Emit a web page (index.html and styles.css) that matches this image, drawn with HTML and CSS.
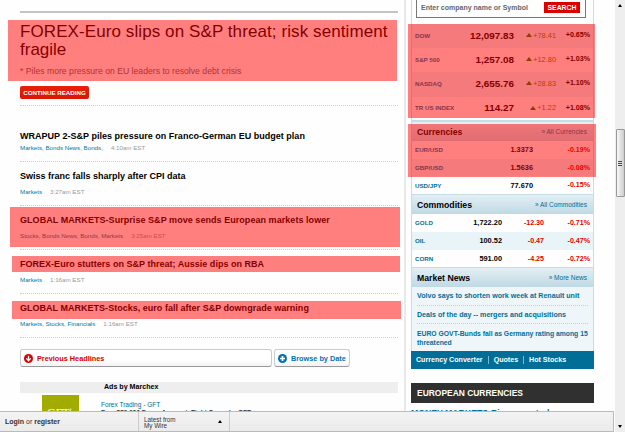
FILE: index.html
```html
<!DOCTYPE html>
<html lang="en">
<head>
<meta charset="utf-8">
<title>FOREX-Euro slips on S&amp;P threat</title>
<link rel="stylesheet" href="styles.css">
</head>
<body>
<div class="window">
  <div class="content">
  <div class="page">
    <main class="main">
      <section class="lead mark mark-lead">
        <h1><span class="l1">FOREX-Euro slips on S&amp;P threat; risk sentiment</span><br>fragile</h1>
        <p>* Piles more pressure on EU leaders to resolve debt crisis</p>
      </section>
      <div class="lead-more"><a class="continue">CONTINUE READING</a></div>
      <article class="story first">
        <h2 class="t1">WRAPUP 2-S&amp;P piles pressure on Franco-German EU budget plan</h2>
        <div class="meta"><a>Markets, Bonds News, Bonds,</a><time>4:10am EST</time></div>
      </article>
      <article class="story">
        <h2>Swiss franc falls sharply after CPI data</h2>
        <div class="meta"><a>Markets</a><time>3:27am EST</time></div>
      </article>
      <article class="story mark mark-a">
        <h2 class="t3">GLOBAL MARKETS-Surprise S&amp;P move sends European markets lower</h2>
        <div class="meta"><a>Stocks, Bonds News, Bonds, Markets</a><time>3:25am EST</time></div>
      </article>
      <article class="story mark mark-b">
        <h2 class="t1">FOREX-Euro stutters on S&amp;P threat; Aussie dips on RBA</h2>
        <div class="meta"><a>Markets</a><time>1:16am EST</time></div>
      </article>
      <article class="story mark mark-c">
        <h2 class="t1">GLOBAL MARKETS-Stocks, euro fall after S&amp;P downgrade warning</h2>
        <div class="meta"><a>Markets, Stocks, Financials</a><time>1:16am EST</time></div>
      </article>
      <nav class="pager">
        <a class="prev"><svg width="9" height="9" viewBox="0 0 9 9"><circle cx="4.5" cy="4.5" r="4.5" fill="#d90000"/><path d="M4.5 1.8v4.6M2.3 4.4l2.2 2.3 2.2-2.3" fill="none" stroke="#fff" stroke-width="1.3"/></svg><span>Previous Headlines</span></a>
        <a class="browse"><svg width="9" height="9" viewBox="0 0 9 9"><circle cx="4.5" cy="4.5" r="4.5" fill="#0072b5"/><path d="M4.5 2v5M2 4.5h5" stroke="#fff" stroke-width="1.7"/></svg><span>Browse by Date</span></a>
      </nav>
      <div class="ads-title">Ads by Marchex</div>
      <div class="ad">
        <div class="ad-logo">GFT<sup>i</sup></div>
        <div class="ad-text"><a>Forex Trading - GFT</a><p>Free $50,000 Demo Account. Tight Spreads. GFT</p></div>
      </div>
    </main>
    <aside class="side">
      <div class="box">
        <div class="search"><span>Enter company name or Symbol</span><b>SEARCH</b></div>
        <div class="mark mark-idx">
          <div class="idx odd"><a>DOW</a><b>12,097.83</b><i></i><span>+78.41</span><em>+0.65%</em></div>
          <div class="idx"><a>S&amp;P 500</a><b>1,257.08</b><i></i><span>+12.80</span><em>+1.03%</em></div>
          <div class="idx odd"><a>NASDAQ</a><b>2,655.76</b><i></i><span>+28.83</span><em>+1.10%</em></div>
          <div class="idx"><a>TR US INDEX</a><b>114.27</b><i></i><span>+1.22</span><em>+1.08%</em></div>
        </div>
        <div class="mark mark-fx">
          <div class="head"><h3>Currencies</h3><a>» All Currencies</a></div>
          <div class="fx"><a>EUR/USD</a><b>1.3373</b><em>-0.19%</em></div>
          <div class="fx odd"><a>GBP/USD</a><b>1.5636</b><em>-0.08%</em></div>
          <div class="fx"><a>USD/JPY</a><b>77.670</b><em>-0.15%</em></div>
        </div>
        <div class="head"><h3>Commodities</h3><a>» All Commodities</a></div>
        <div class="com"><a>GOLD</a><b>1,722.20</b><span>-12.30</span><em>-0.71%</em></div>
        <div class="com odd"><a>OIL</a><b>100.52</b><span>-0.47</span><em>-0.47%</em></div>
        <div class="com"><a>CORN</a><b>591.00</b><span>-4.25</span><em>-0.72%</em></div>
        <div class="head"><h3>Market News</h3><a>» More News</a></div>
        <ul class="news">
          <li>Volvo says to shorten work week at Renault unit</li>
          <li>Deals of the day -- mergers and acquisitions</li>
          <li class="n3">EURO GOVT-Bunds fall as Germany rating among 15 threatened</li>
        </ul>
      </div>
      <nav class="tools"><a>Currency Converter</a><a>Quotes</a><a>Hot Stocks</a></nav>
      <h3 class="euro">EUROPEAN CURRENCIES</h3>
      <a class="mm">MONEY MARKETS-Bigger central</a>
    </aside>
  </div>
  <footer class="bar">
    <div class="login"><b>Login</b> or <b>register</b></div>
    <div class="wire"><span>Latest from<br>My Wire</span><i class="up"></i></div>
  </footer>
  </div>
  <div class="scrollbar">
    <i class="up"></i><div class="thumb"><i></i><i></i><i></i></div><i class="down"></i>
  </div>
</div>
</body>
</html>
```
FILE: styles.css
```css
* { box-sizing: border-box; margin: 0; padding: 0; }
body { width: 625px; height: 432px; overflow: hidden; background: #fff; font-family: "Liberation Sans", Arial, sans-serif; color: #000; }
.window { width: 625px; height: 432px; display: flex; overflow: hidden; }
.content { width: 615px; height: 432px; background: #fefefe; }
.page { width: 615px; height: 411px; display: flex; overflow: hidden; }
a, h1, h2, h3, time, span, b, em { white-space: nowrap; }
i, em { font-style: normal; }
svg { flex: none; }

.mark { position: relative; }
.mark::after { content: ""; position: absolute; background: rgba(255, 0, 0, .5); }
.mark-lead::after { left: -12px; top: 7px; width: 389px; height: 61px; }
.mark-a::after { left: -10px; top: 1px; width: 390px; height: 40px; }
.mark-b::after { left: -8px; top: 6px; width: 388px; height: 16px; }
.mark-c::after { left: -8px; top: 7px; width: 389px; height: 18px; }
.mark-idx::after { left: -4px; top: 0; width: 187px; height: 94px; }
.mark-fx::after { left: -4px; top: 3px; width: 188px; height: 53px; }

.main { width: 406px; height: 411px; padding: 11px 6px 0 20px; border-right: 2px solid #e9e9e9; }
.lead { width: 378px; height: 71px; border-top: 2px solid #c4c4c4; padding-top: 10px; }
.lead h1 { font-size: 17px; line-height: 18px; font-weight: 400; }
.l1 { letter-spacing: .09px; }
.lead p { font-size: 8.67px; line-height: 10px; margin-top: 7px; color: #666; white-space: nowrap; }
.lead-more { width: 378px; height: 24px; padding-top: 4px; border-bottom: 1px dotted #ccc; }
.continue { display: block; width: 69px; height: 13px; border-radius: 2px; background: linear-gradient(#e8200a, #dc1500); color: #fff; font-weight: 700; font-size: 6.2px; line-height: 14px; text-align: center; }

.story { width: 378px; height: 44px; padding-top: 9px; border-bottom: 1px dotted #ccc; }
.story.first { height: 56px; padding-top: 25px; }
.story h2 { font-size: 9px; line-height: 11px; height: 11px; }
.story .t1 { letter-spacing: .02px; }
.story .t3 { letter-spacing: .05px; }
.meta { display: flex; gap: 8px; margin-top: 6px; font-size: 6.2px; line-height: 8px; color: #999; }
.first .meta { margin-top: 2px; }
.meta a { color: #0079a3; }

.pager { display: flex; gap: 2px; margin-top: 11px; }
.pager a { display: flex; align-items: center; height: 18px; padding: 0 3px; gap: 4px; border: 1px solid #ccc; border-bottom-color: #999; border-radius: 3px; background: linear-gradient(#fff 60%, #f3f3f3); font-weight: 700; font-size: 7.3px; }
.pager .prev { width: 252px; color: #d90000; }
.pager .browse { width: 76px; color: #0072b5; }
.ads-title { width: 378px; height: 11px; margin-top: 15px; padding-left: 84px; background: #eee; font-size: 7.1px; line-height: 11px; font-weight: 700; }
.ad { display: flex; padding: 2px 0 0 22px; gap: 22px; }
.ad-logo { width: 37px; height: 16px; overflow: hidden; padding: 11px 0 0 5px; background: #a1ab00; color: #fff; font: 12px/14px "Liberation Serif", serif; }
.ad-logo sup { font-size: 7px; line-height: 1px; }
.ad-text { padding-top: 5px; font-size: 6.55px; line-height: 9px; white-space: nowrap; }
.ad-text a { display: block; color: #006e97; }
.ad-text p { font-weight: 700; font-size: 6.5px; line-height: 8px; color: #333; }

.side { width: 183px; margin-left: 5px; }
.box { border: 1px solid #c5dde6; border-width: 0 1px; }
.search { display: flex; justify-content: space-between; align-items: flex-start; width: 170px; height: 18px; margin: 0 0 6px 4px; padding: 2px 5px 0 4px; border: 1px solid #777; border-top: 0; font-size: 7px; line-height: 11px; font-weight: 700; color: #666; }
.search b { width: 36px; height: 11px; background: #d90000; color: #fff; text-align: center; font-size: 6.9px; line-height: 11px; }
.idx, .fx, .com { display: grid; align-items: center; padding: 0 3px; font-size: 7.1px; font-weight: 700; text-align: right; }
.idx a, .fx a, .com a { text-align: left; color: #006e97; font-size: 6.2px; }
.idx { height: 24.2px; grid-template-columns: 46px 53px 1fr auto 34px; padding-bottom: 2px; }
.idx b { font-size: 9.9px; }
.idx i { justify-self: end; margin-right: 1px; border: 3.5px solid transparent; border-top: 0; border-bottom: 4px solid #158000; }
.idx span { color: #728000; font-weight: 400; font-size: 7.4px; }
.odd { background: #e8f4f7; }
.mark-idx { height: 97px; border-bottom: 1px solid #c5dde6; }
.fx { height: 17.7px; grid-template-columns: 46px 72px 1fr; }
.fx b, .com b { font-size: 7.4px; }
.fx em, .com em, .com span { color: #df0000; }
.com { height: 17.8px; grid-template-columns: 40px 47px 42px 1fr; }
.head { height: 20px; display: flex; justify-content: space-between; align-items: center; padding: 0 6px 0 5px; background: linear-gradient(#e3eff4, #bfd9e4); border-top: 1px solid #c5dde6; }
.head h3 { font-size: 8.7px; }
.head a { font-size: 6.5px; color: #006e97; }
.news { list-style: none; height: 63.5px; padding: 0 5px; background: #eef6fa; color: #006e97; font-weight: 700; font-size: 7.1px; line-height: 9px; }
.news li { height: 18.5px; padding-top: 5px; border-bottom: 1px dotted #b9d3de; white-space: nowrap; }
.news .n3 { height: 26px; padding-top: 4.5px; border: 0; font-size: 6.8px; white-space: normal; }
.tools { display: flex; align-items: center; width: 183px; height: 18px; padding-left: 5px; background: #006e97; color: #fff; font-weight: 700; font-size: 7.1px; }
.tools a + a { margin-left: 5px; padding-left: 5px; border-left: 1px solid #80b7cb; }
.euro { width: 183px; height: 20px; margin-top: 14px; padding-left: 6px; background: #303030; color: #fff; font-size: 8.45px; line-height: 20px; }
.mm { display: block; margin-top: 5px; font-size: 8.7px; font-weight: 700; color: #006e97; line-height: 10px; }

.scrollbar { width: 10px; height: 432px; display: flex; flex-direction: column; align-items: center; background: #eee; padding: 4px 0; }
.up, .down { border: 2px solid transparent; }
.up { border-top: 0; border-bottom: 3px solid #000; }
.down { border-bottom: 0; border-top: 3px solid #000; margin-top: auto; }
.thumb { width: 9px; height: 68px; margin-top: 122px; border: 1px solid #999; border-radius: 1px; background: linear-gradient(90deg, #f8f8f8, #ccc); display: flex; flex-direction: column; justify-content: center; align-items: center; gap: 1px; }
.thumb i { width: 4px; height: 1px; background: #444; }
.bar { width: 614px; height: 21px; display: flex; border: 1px solid #bbb; border-left: 0; background: linear-gradient(#f3f3f3, #ebebeb); font-size: 7px; color: #333; }
.login { width: 139px; padding-left: 5px; line-height: 20px; border-right: 1px solid #ccc; }
.wire { width: 91px; padding: 5px 7px 0 5px; display: flex; justify-content: space-between; border-right: 1px solid #ccc; font-size: 6.3px; line-height: 6px; }
.wire .up { margin-top: 3px; height: 3px; }
```
